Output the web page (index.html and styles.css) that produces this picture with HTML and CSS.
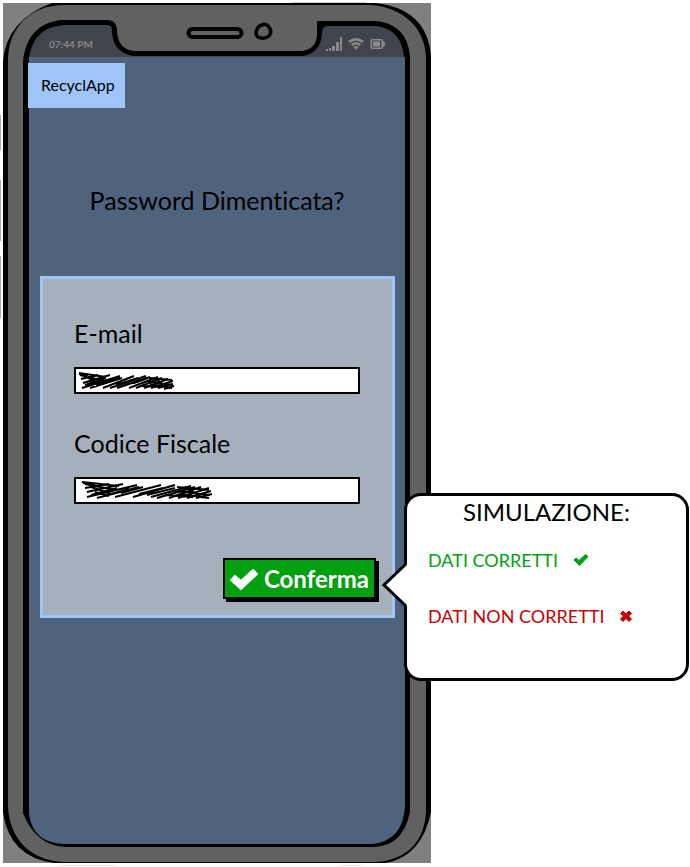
FILE: index.html
```html
<!DOCTYPE html>
<html lang="it">
<head>
<meta charset="utf-8">
<meta name="viewport" content="width=device-width, initial-scale=1">
<title>RecyclApp</title>
<link rel="stylesheet" href="styles.css">
</head>
<body>
<main class="phone">
  <svg class="frame" viewBox="3 3 428 860" preserveAspectRatio="none" aria-hidden="true">
    <path d="M3 3H431V863H3Z" fill="#808080"/>
    <path d="M.5 115V150M.5 180V241M.5 256V318" stroke="#aaa"/>
    <path d="M60 866H116M340 866H363M292 2.500H366" stroke="#ccc"/>
    <path d="M52 3H376Q427 9 431 56V812Q422 856 386 863H54Q9 857 3 812V62Q6 20 52 3Z" fill="#000"/>
    <path d="M64 5H370C402 7 426 27 426 60V812C424 846 402 861 374 862H64C30 861 9 838 8 806V60C8 30 28 5 64 5Z" fill="#616161"/>
    <path d="M23 62C25 38 38 22 62 20H109Q116 21 117 29Q117 50 135 51H303Q317 48 317 34V21H376Q407 24 410 56V812Q403 846 374 847H66Q36 846 23 813Z" fill="#000"/>
    <path d="M29 57C33 38 42 26 66 25H107Q112 25 112 30Q112 52 133 56H303Q321 53 322 33Q322 26 328 26H374C395 27 403 42 404 57Z" fill="#42444d"/>
    <path d="M29 57H405V806Q403 841 372 844H66Q33 844 29 814Z" fill="#50637d"/>
    <rect x="188.500" y="29" width="53" height="8" rx="4" fill="#616161" stroke="#000" stroke-width="4"/>
    <path d="M262 25C257 26 254 34 258 37Q264 40 269 36Q273 31 268 26Q265 23 262 25Z" fill="#616161" stroke="#000" stroke-width="3.500"/>
  </svg>
  <header class="status">
    <span>07:44 PM</span>
    <svg width="60" height="16" viewBox="0 0 60 16" fill="#8b8989" aria-hidden="true">
      <path d="M0 13h2v2H0zM3 12h2v3H3zM6 10h3v5H6zM10 6h3v9h-3zM14 1h2v14h-2z"/>
      <path d="M22 5Q30-1 38 5L36 7Q30 2 24 7ZM25 8Q30 4 35 8L33.500 10Q30 7 26.500 10ZM27.500 11Q30 9 32.500 11L30 14Z"/>
      <path d="M46 3H55Q57 3 57 5Q59 5 59 8Q59 11 57 11Q57 13 55 13H46Q44.500 13 44.500 11V5Q44.500 3 46 3ZM46 4.500V11.500H55.500V4.500ZM47 5.500H54V10.500H47Z" fill-rule="evenodd"/>
    </svg>
  </header>
  <div class="brand">RecyclApp</div>
  <h1>Password Dimenticata?</h1>
  <form class="card">
    <label for="email">E-mail</label>
    <div class="field">
      <input id="email" type="email">
      <svg class="scribble" width="100" height="22" viewBox="0 0 100 22" aria-hidden="true">
        <path d="M3 5L12 6M5 10L22 6M7 14L34 6M9 16L30 9M6 19L44 7M14 19L46 9M20 16L38 10M27 19L58 7M29 14L44 9M34 19L70 7M40 16L62 9M41 19L74 8M53 19L82 8M58 14L72 9M60 19L86 9M68 19L92 10M75 19L97 12M82 19L97 15M88 20L98 17"/>
        <path d="M3 4L30 8M4 6L28 12M9 7L24 16M14 11L24 14M73 9L96 11M71 12L97 16M74 15L96 19M80 10L92 19M66 17L86 18"/>
      </svg>
    </div>
    <label for="codice">Codice Fiscale</label>
    <div class="field">
      <input id="codice" type="text">
      <svg class="scribble wide" width="134" height="22" viewBox="0 0 134 22" aria-hidden="true">
        <path d="M4 4L16 6M6 9L30 5M8 13L44 5M12 16L38 9M8 18L58 6M18 19L60 8M28 16L50 10M36 18L82 6M42 14L64 8M54 18L96 6M60 15L84 9M68 16L96 9M72 18L112 7M78 19L116 8M90 19L122 8M99 19L130 9M108 19L132 12M117 19L133 15"/>
        <path d="M3 3L40 7M6 5L36 11M12 8L32 15M16 13L30 17M98 8L130 11M96 12L131 16M100 15L130 19M106 8L124 19M86 16L114 18"/>
      </svg>
    </div>
    <div class="action">
      <button type="button">
        <svg width="30" height="24" viewBox="0 0 30 24" aria-hidden="true"><path d="M2 13L6 9L12 14L24 3L28 7L12 22Z" fill="#fff" stroke="#fff" stroke-width="2" stroke-linejoin="round"/></svg>
        <span>Conferma</span>
      </button>
      <aside class="callout">
        <svg class="tail" width="26" height="44" viewBox="0 0 26 44" aria-hidden="true"><path d="M26 0L1 22L26 44Z" fill="#fff"/><path d="M24 1L2 22L24 43" fill="none" stroke="#000" stroke-width="3"/></svg>
        <h2>SIMULAZIONE:</h2>
        <a class="ok" href="#ok">DATI CORRETTI
          <svg width="14" height="12" viewBox="0 0 14 12" aria-hidden="true"><path d="M0 6L2 4L5 6.500L11.500 0.500L14 2.500L5.500 11.500Z" fill="#00a010" stroke="#00a010"/></svg>
        </a>
        <a class="bad" href="#errore">DATI NON CORRETTI
          <svg width="12" height="12" viewBox="0 0 12 12" aria-hidden="true"><path d="M3 1L6 4L9 1L11.500 3.500L8.500 6L11.500 9L9 11.500L6 8.500L3 11.500L.5 9L3.500 6L.5 3.500Z" fill="#c80000" stroke="#c80000"/></svg>
        </a>
      </aside>
    </div>
  </form>
</main>
</body>
</html>
```
FILE: styles.css
```css
* { box-sizing: border-box; }

body {
  margin: 0;
  padding: 3px;
  background: #fff;
  color: #000;
  font-family: Lato, "Liberation Sans", sans-serif;
  font-variant-ligatures: none;
}

.phone {
  position: relative;
  max-width: 428px;
  padding: 22px 25px 245px;
}

.frame {
  position: absolute;
  inset: 0;
  width: 100%;
  height: 100%;
  overflow: visible;
}

.status, .brand, h1, .card { position: relative; }

.status {
  display: flex;
  justify-content: space-between;
  align-items: center;
  height: 38px;
  padding: 0 20px 0 21px;
  color: #8b8989;
  font-size: 10px;
  font-weight: 700;
}

.brand {
  width: fit-content;
  padding: 12px 10px 13px 13px;
  background: #9fc5f8;
  font-size: 16px;
  line-height: 20px;
}

h1 {
  margin: 76px 0 60px;
  text-align: center;
  font-size: 25px;
  font-weight: 400;
  line-height: 32px;
}

.card {
  margin: 0 11px 0 12px;
  padding: 38px 13px 13px 31px;
  border: 3px solid #9fc5f8;
  background: #a6b0bc;
}

label {
  display: block;
  font-size: 25px;
  line-height: 32px;
}

.field {
  position: relative;
  margin: 18px 19px 33px 0;
}

input {
  display: block;
  width: 100%;
  height: 27px;
  padding: 0 6px;
  border: 2px solid #000;
  border-radius: 1px;
  background: #fff;
  font: inherit;
}

.scribble {
  position: absolute;
  top: 2px;
  left: 2px;
  fill: none;
  stroke: #000;
  stroke-width: 2;
}

.wide { left: 5px; }

.action {
  position: relative;
  width: fit-content;
  margin: 54px 0 0 auto;
}

button {
  display: flex;
  align-items: center;
  gap: 5px;
  margin: 0 3px 3px 0;
  padding: 4px 5px 3px 4px;
  border: 2px solid #000;
  background: #00a010;
  box-shadow: 3px 3px 0 #000;
  color: #fff;
  font: 700 24px/30px Lato, "Liberation Sans", sans-serif;
}

.callout {
  position: absolute;
  top: -65px;
  left: calc(100% + 25px);
  display: flex;
  flex-direction: column;
  align-items: flex-start;
  width: 285px;
  padding: 0 21px 50px;
  border: 3px solid #000;
  border-radius: 17px;
  background: #fff;
}

.tail {
  position: absolute;
  top: 67px;
  left: -25px;
}

h2 {
  align-self: center;
  margin: 0 0 20px;
  font-size: 24px;
  font-weight: 400;
  line-height: 32px;
}

a {
  display: flex;
  align-items: center;
  gap: 16px;
  margin-bottom: 32px;
  font-size: 18px;
  line-height: 24px;
  text-decoration: none;
}

a:last-child { margin-bottom: 0; }

a svg { overflow: visible; }

.ok { color: #00a010; }
.bad { color: #c80000; }
```
